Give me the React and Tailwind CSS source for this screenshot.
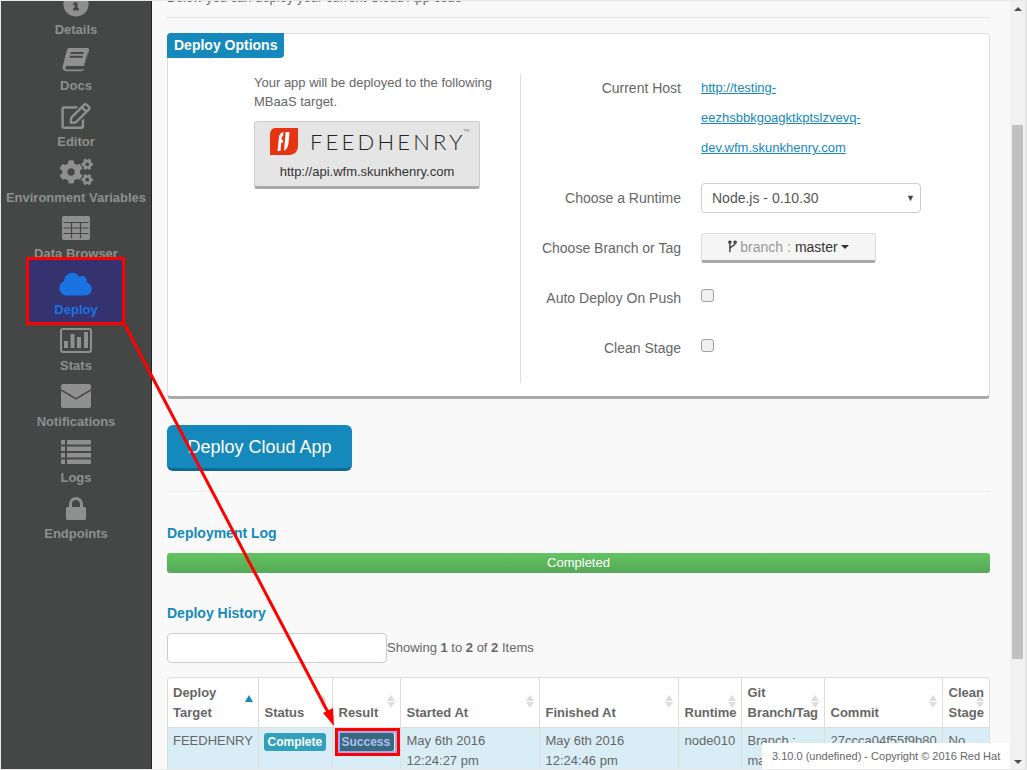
import React from 'react';
import { FaInfoCircle, FaRegEdit, FaCogs, FaCloud } from 'react-icons/fa';

const DARK = '#454746';

const BookIcon = ({ className }) => (
  <svg viewBox="0 0 30 28" className={className} fill="currentColor">
    <path d="M8 1h19c1.600 0 2.300 1.200 2 2.600l-4.600 19c-.5 2-2 3.400-4.200 3.400H4.500C1.500 26 0 24 .6 21.400L5 4c.4-1.800 1.400-3 3-3z" />
    <path d="M9.500 5.500h14l-.5 2h-14zM8.500 9.500h14l-.5 2H8z" fill={DARK} />
    <path d="M4.500 20.500h17.800c1 0 1.500-.5 1.800-1.400L27.500 5l-.3 10-2.800 7.800c-.4 1-1 1.400-2.200 1.400H4.800c-1 0-1.300-.7-1-1.600.2-1 .7-2.100.7-2.100z" fill={DARK} />
  </svg>
);

const TableIcon = ({ className }) => (
  <svg viewBox="0 0 28 24" className={className}>
    <rect width="28" height="24" rx="2" fill="currentColor" />
    <path d="M1.500 6.500h25M1.500 12h25M1.500 17.500h25M9.500 6.500v16M18.500 6.500v16" stroke={DARK} strokeWidth="1.200" fill="none" />
  </svg>
);

const StatsIcon = ({ className }) => (
  <svg viewBox="0 0 32 25" className={className} fill="currentColor">
    <rect x="1" y="1" width="30" height="23" rx="2" fill="none" stroke="currentColor" strokeWidth="2" />
    <rect x="4" y="13" width="4" height="7" />
    <rect x="10.500" y="6" width="4" height="14" />
    <rect x="17" y="9" width="4" height="11" />
    <rect x="24" y="4" width="4" height="16" />
  </svg>
);

const EnvelopeIcon = ({ className }) => (
  <svg viewBox="0 0 30 24" className={className}>
    <rect width="30" height="24" rx="2" fill="currentColor" />
    <path d="M0 6l15 9 15-9" stroke={DARK} strokeWidth="1.500" fill="none" />
  </svg>
);

const ListIcon = ({ className }) => (
  <svg viewBox="0 0 30 24" className={className} fill="currentColor">
    {[0, 6.500, 13, 19.500].map((y) => (
      <g key={y}>
        <rect x="0" y={y} width="4" height="4.500" />
        <rect x="6" y={y} width="24" height="4.500" />
      </g>
    ))}
  </svg>
);

const LockIcon = ({ className }) => (
  <svg viewBox="0 0 20 23" className={className} fill="currentColor">
    <rect y="10" width="20" height="13" rx="1" />
    <path d="M4.500 11V7a5.500 5.500 0 0 1 11 0v4" fill="none" stroke="currentColor" strokeWidth="3" />
  </svg>
);

const FeedHenryMark = ({ className }) => (
  <svg viewBox="0 0 29 29" className={className}>
    <path d="M6 1h23v18c0 5-3.500 9-9 9H1V8c0-4 2-7 5-7z" fill="#e63312" />
    <path d="M8.500 24 10 10c.3-2.500 1.800-4.500 4.500-5l-.4 4c-1 .3-1.300.9-1.400 1.800l-.2 2h1.500l-.3 3h-1.500l-.7 8.200z" fill="#fff" />
    <path d="M20.500 5l-1 11c-.3 3.500-1.800 6.500-4.500 8l.7-8 .9-11z" fill="#fff" />
  </svg>
);

const BranchIcon = () => (
  <svg viewBox="0 0 10 16" className="h-[14px] w-[9px]" fill="none" stroke="#333" strokeWidth="1.500">
    <circle cx="2" cy="2.500" r="1.300" />
    <circle cx="8" cy="2.500" r="1.300" />
    <path d="M2 4v10M8 4c0 3-6 3-6 6" />
  </svg>
);

const navItems = [
  { label: 'Details', icon: <FaInfoCircle className="h-[26px] w-[26px]" /> },
  { label: 'Docs', icon: <BookIcon className="h-[26px] w-[28px]" /> },
  { label: 'Editor', icon: <FaRegEdit className="h-[26px] w-[30px]" /> },
  { label: 'Environment Variables', icon: <FaCogs className="h-[30px] w-[33px]" /> },
  { label: 'Data Browser', icon: <TableIcon className="h-[24px] w-[28px]" /> },
  { label: 'Deploy', icon: <FaCloud className="-ml-[2px] h-[26px] w-[33px]" />, active: true },
  { label: 'Stats', icon: <StatsIcon className="h-[25px] w-[32px]" /> },
  { label: 'Notifications', icon: <EnvelopeIcon className="h-[24px] w-[30px]" /> },
  { label: 'Logs', icon: <ListIcon className="h-[24px] w-[30px]" /> },
  { label: 'Endpoints', icon: <LockIcon className="h-[23px] w-[20px]" /> },
];

const NavItem = ({ label, icon, active }) => (
  <div className={`relative flex h-14 flex-col items-center ${active ? 'text-[#1a73e0]' : 'text-[#8f8f8f]'}`}>
    {active && (
      <div className="absolute -top-[10px] -bottom-[2px] left-[25px] right-[26px] border-[3px] border-[#f00] bg-[#35336f]"></div>
    )}
    <div className="relative flex h-[34px] items-center justify-center">{icon}</div>
    <div className="relative whitespace-nowrap text-[13px] font-bold leading-[18px]">{label}</div>
  </div>
);

const FormRow = ({ label, className, children }) => (
  <div className={`flex ${className}`}>
    <div className="w-[160px] shrink-0 text-right text-sm leading-[30px]">{label}</div>
    <div className="ml-5">{children}</div>
  </div>
);

const Checkbox = () => (
  <div className="mt-[1px] h-[13px] w-[13px] rounded-[3px] border border-[#a0a0a0] bg-[#f0f0f0]"></div>
);

const Sort = ({ active }) => (
  <div className="absolute right-[5px] top-[17px] flex flex-col gap-[1px]">
    {active ? (
      <div className="h-0 w-0 border-x-[4px] border-b-[7px] border-x-transparent border-b-[#1589bb]"></div>
    ) : (
      <>
        <div className="h-0 w-0 border-x-[4px] border-b-[6px] border-x-transparent border-b-[#ddd]"></div>
        <div className="h-0 w-0 border-x-[4px] border-t-[6px] border-x-transparent border-t-[#ddd]"></div>
      </>
    )}
  </div>
);

const columns = [
  { label: 'Deploy Target', width: 'w-[90px]', active: true },
  { label: 'Status', width: 'w-[74px]' },
  { label: 'Result', width: 'w-[68px]' },
  { label: 'Started At', width: 'w-[139px]' },
  { label: 'Finished At', width: 'w-[139px]' },
  { label: 'Runtime', width: 'w-[63px]' },
  { label: 'Git Branch/Tag', width: 'w-[83px]' },
  { label: 'Commit', width: 'w-[118px]' },
  { label: 'Clean Stage', width: 'w-[47px]' },
];

const cell = 'border-l border-[#ddd] pl-[6px] pr-[4px] pb-[4px] pt-[3px] align-top first:border-l-0 first:pl-[5px]';

const DeployTable = () => (
  <div className="mt-[14px] h-[120px] overflow-hidden rounded-t-[4px] border border-b-0 border-[#ddd]">
    <table className="w-full table-fixed border-collapse text-[13px] leading-5">
      <colgroup>
        {columns.map((c) => (
          <col key={c.label} className={c.width} />
        ))}
      </colgroup>
      <thead>
        <tr className="h-[49px] bg-white">
          {columns.map((c) => (
            <th key={c.label} className="relative border-b border-l border-[#ddd] pb-[4px] pl-[6px] pr-[4px] pt-[3px] text-left align-bottom font-bold first:border-l-0 first:pl-[5px]">
              {c.label}
              <Sort active={c.active} />
            </th>
          ))}
        </tr>
      </thead>
      <tbody>
        <tr className="bg-[#d9edf7]">
          <td className={cell}>FEEDHENRY</td>
          <td className={cell}>
            <span className="relative top-px -ml-px inline-block h-[18px] rounded-[3px] bg-[#31a0bd] px-[4px] text-xs font-bold leading-[18px] text-white">Complete</span>
          </td>
          <td className={cell}>
            <span className="relative top-px -ml-px inline-block h-[18px] rounded-[2px] bg-[#386a7d] px-[4px] text-xs font-bold leading-[18px] text-[#b4bcf5]">Success</span>
          </td>
          <td className={cell}>May 6th 2016 12:24:27 pm</td>
          <td className={cell}>May 6th 2016 12:24:46 pm</td>
          <td className={cell}>node010</td>
          <td className={cell}>Branch : master</td>
          <td className={`${cell} overflow-hidden`}>27ccca04f55f9b80</td>
          <td className={cell}>No</td>
        </tr>
      </tbody>
    </table>
  </div>
);

export default function App() {
  return (
    <div className="relative flex h-[770px] w-[1027px] overflow-hidden bg-[#f9f9f9] font-['Liberation_Sans',Arial,sans-serif] text-[#666]">
      {/* sidebar */}
      <div className="w-[152px] shrink-0 border-r border-[#222] bg-[#454746] pl-px">
        <div className="-mt-[13px]">
          {navItems.map((item) => (
            <NavItem key={item.label} {...item} />
          ))}
        </div>
      </div>

      {/* main content */}
      <div className="min-w-0 flex-1 pl-[15px] pr-5">
        <div className="-mt-[11px] border-b border-[#e5e5e5] pb-[10px] text-[13px] leading-[18px]">
          Below you can deploy your current Cloud App code
        </div>

        <div className="mt-[15px] flex h-[366px] flex-col rounded-[4px] border border-b-[3px] border-[#ddd] border-b-[#aaa] bg-white">
          <div className="-ml-[1px] -mt-[1px] h-[25px] w-[117px] rounded-tl-[4px] rounded-br-[4px] bg-[#1589bb] pl-[7px] text-sm font-bold leading-[24px] text-white">
            Deploy Options
          </div>
          <div className="flex pt-[15px]">
            <div className="w-[352px] pl-[86px]">
              <div className="w-[240px] text-[13px] leading-[19px]">
                Your app will be deployed to the following MBaaS target.
              </div>
              <div className="mt-[10px] h-[68px] w-[226px] rounded-[3px] border border-b-[3px] border-[#ccc] border-b-[#aaa] bg-[#e5e5e5]">
                <div className="flex h-[38px] items-center pl-[14px] pt-[1px]">
                  <FeedHenryMark className="h-[29px] w-[29px]" />
                  <span className="relative ml-[12px] font-['Lato',sans-serif] text-[22px] font-light leading-none tracking-[3.2px] text-[#222]">
                    FEEDHENRY
                    <span className="absolute -right-[4px] -top-[2px] text-[4px] tracking-normal">TM</span>
                  </span>
                </div>
                <div className="text-center text-[13px] leading-[24px] text-[#333]">http://api.wfm.skunkhenry.com</div>
              </div>
            </div>
            <div className="mt-px h-[309px] flex-1 border-l border-[#ddd]">
              <FormRow label="Current Host" className="-mt-px">
                <a className="block w-[190px] text-[13px] leading-[30px] text-[#1589bb] underline">
                  http://testing-eezhsbbkgoagktkptslzvevq-dev.wfm.skunkhenry.com
                </a>
              </FormRow>
              <FormRow label="Choose a Runtime" className="mt-[20px]">
                <div className="flex h-[30px] w-[220px] items-center justify-between rounded-[4px] border border-[#ccc] bg-white pl-[10px] pr-[5px] text-sm text-[#555]">
                  <span>Node.js - 0.10.30</span>
                  <span className="text-[9px] text-[#444]">▼</span>
                </div>
              </FormRow>
              <FormRow label="Choose Branch or Tag" className="mt-[20px]">
                <div className="flex h-[30px] w-[175px] items-center justify-center gap-[3px] rounded-[3px] border border-b-[3px] border-[#ddd] border-b-[#aaa] bg-[#f5f5f5] text-sm">
                  <BranchIcon />
                  <span className="text-[#999]">branch :</span>
                  <span className="ml-[1px] text-[#333]">master</span>
                  <span className="h-0 w-0 border-x-[4px] border-t-[4px] border-x-transparent border-t-[#333]"></span>
                </div>
              </FormRow>
              <FormRow label="Auto Deploy On Push" className="mt-[20px]">
                <div className="h-[30px] pt-[5px]">
                  <Checkbox />
                </div>
              </FormRow>
              <FormRow label="Clean Stage" className="mt-[20px]">
                <div className="h-[30px] pt-[5px]">
                  <Checkbox />
                </div>
              </FormRow>
            </div>
          </div>
        </div>

        <button className="mt-[26px] block h-[46px] w-[185px] rounded-[6px] border-b-[3px] border-[#0e6a93] bg-[#1589bb] text-lg text-white">
          Deploy Cloud App
        </button>
        <div className="mt-5 border-t border-[#eee]"></div>

        <div className="mt-[32px] text-sm font-bold leading-[18px] text-[#1589bb]">Deployment Log</div>
        <div className="mt-[11px] h-5 rounded-[3px] bg-gradient-to-b from-[#62c462] to-[#57a957] text-center text-[13px] leading-[19px] text-white">
          Completed
        </div>
        <div className="mt-[31px] text-sm font-bold leading-[18px] text-[#1589bb]">Deploy History</div>

        <div className="mt-[11px] flex items-center">
          <div className="h-[30px] w-[220px] rounded-[4px] border border-[#ccc] bg-white"></div>
          <div className="text-[13px]">
            Showing <b>1</b> to <b>2</b> of <b>2</b> Items
          </div>
        </div>

        <DeployTable />
      </div>

      {/* window scrollbar */}
      <div className="relative w-[17px] shrink-0 border-r-2 border-[#e4e4e4] bg-[#f1f1f1]">
        <div className="absolute left-[4px] top-[7px] h-0 w-0 border-x-[4px] border-b-[4px] border-x-transparent border-b-[#505050]"></div>
        <div className="ml-[2px] mt-[125px] h-[534px] w-[11px] bg-[#c1c1c1]"></div>
        <div className="absolute bottom-[6px] left-[4px] h-0 w-0 border-x-[4px] border-t-[4px] border-x-transparent border-t-[#505050]"></div>
      </div>

      {/* footer */}
      <div className="absolute bottom-0 right-[17px] h-[27px] w-[248px] bg-white pl-[10px] text-[11px] leading-[26px]">
        3.10.0 (undefined) - Copyright © 2016 Red Hat
      </div>

      {/* annotation over the Success badge and the arrow */}
      <div className="absolute left-[335px] top-[728px] h-[28px] w-[65px] border-[3px] border-[#f00]">
        <div className="h-full w-full border-2 border-[#a4abf2]"></div>
      </div>
      <svg className="pointer-events-none absolute left-0 top-0 h-[770px] w-[1027px]" viewBox="0 0 1027 770">
        <path d="M125 325 331 718" stroke="#f00" strokeWidth="3" fill="none" />
        <path d="M334 726 323 713 333 708z" fill="#f00" />
      </svg>

      {/* thin window frame of the screenshot */}
      <div className="pointer-events-none absolute inset-0 border border-[#e8e8e8]"></div>
    </div>
  );
}
